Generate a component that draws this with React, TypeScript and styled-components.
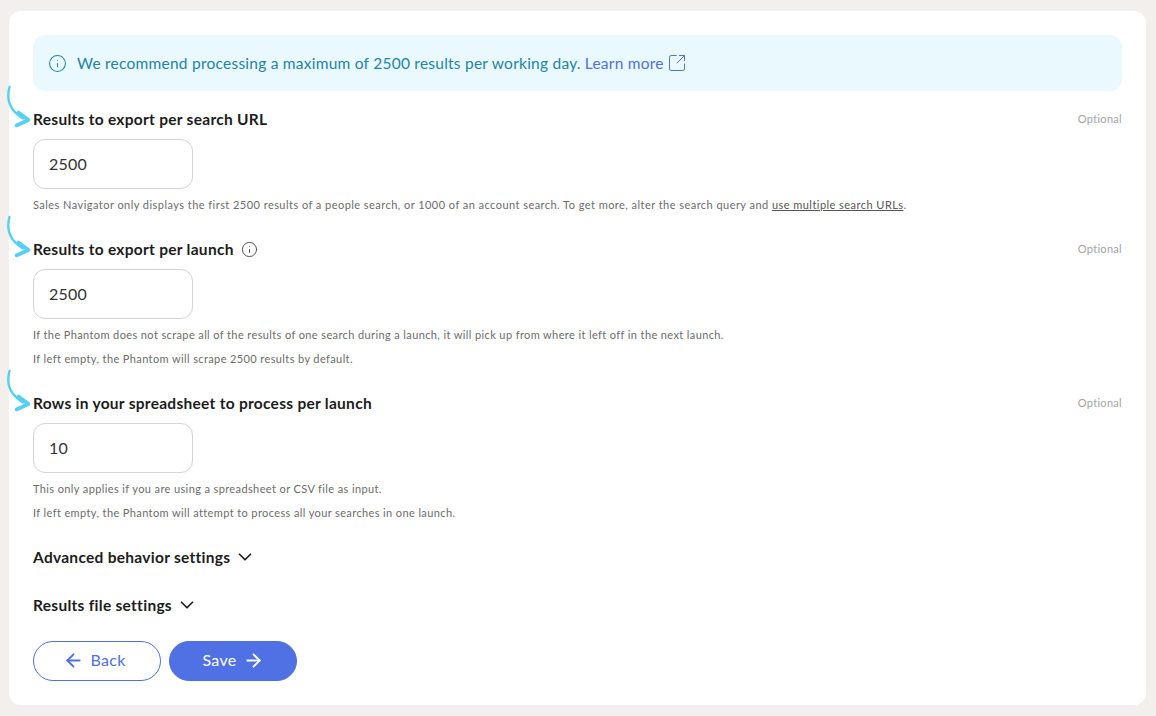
import React from 'react'
import styled, { createGlobalStyle } from 'styled-components'
import { ArrowLeft, ArrowRight, ChevronDown, Info, SquareArrowOutUpRight } from 'lucide-react'

const GlobalStyle = createGlobalStyle`
  html, body {
    margin: 0;
    padding: 0;
    background: #f3efec;
  }
  body {
    font-family: 'Lato', 'Open Sans', sans-serif;
  }
`

const Page = styled.div`
  width: 1156px;
  height: 716px;
  box-sizing: border-box;
  padding: 11px 10px 11px 9px;
  overflow: hidden;
`

const Card = styled.main`
  height: 694px;
  box-sizing: border-box;
  padding: 24px;
  background: #fff;
  border-radius: 12px;
  display: flex;
  flex-direction: column;
`

const Banner = styled.div`
  height: 56px;
  box-sizing: border-box;
  padding: 0 15px;
  display: flex;
  align-items: center;
  gap: 10px;
  background: #e9f9fe;
  border-radius: 12px;
  color: #2384a3;
  font-size: 15.5px;
  letter-spacing: 0.24px;
`

const BannerLink = styled.a`
  color: #4f71dc;
  display: inline-flex;
  align-items: center;
  gap: 3px;
  margin-left: -6px;
`

const Field = styled.section<{ $top: number }>`
  position: relative;
  margin-top: ${(p) => p.$top}px;
`

const FieldHeader = styled.div`
  height: 20px;
  display: flex;
  align-items: center;
  justify-content: space-between;
`

const LabelGroup = styled.div`
  display: flex;
  align-items: center;
  gap: 7px;
`

const Label = styled.label`
  color: #1c1c1c;
  font-size: 15.5px;
  font-weight: 700;
  letter-spacing: 0.28px;
`

const Optional = styled.span`
  position: relative;
  top: -1px;
  color: #a3a3a3;
  font-size: 11px;
  letter-spacing: 0.3px;
`

const NumberInput = styled.input`
  display: block;
  width: 160px;
  height: 50px;
  box-sizing: border-box;
  margin-top: 10px;
  padding: 0 15px 2px;
  border: 1px solid #d4d4d4;
  border-radius: 12px;
  outline: none;
  color: #333;
  font: 400 16px 'Lato', sans-serif;
  letter-spacing: 0.2px;
`

const HelpBlock = styled.div`
  margin-top: 8px;
  display: flex;
  flex-direction: column;
  gap: 8px;
`

const Help = styled.p<{ $wide?: boolean }>`
  margin: 0;
  height: 16px;
  line-height: 16px;
  color: #6b6b6b;
  font-size: 11px;
  letter-spacing: ${(p) => (p.$wide ? '0.456px' : '0.385px')};
`

const HelpLink = styled.a`
  color: #555;
  text-decoration: underline;
`

const Annotation = styled.svg`
  position: absolute;
  left: -28px;
  top: -24px;
  width: 30px;
  height: 44px;
`

const Collapsible = styled.button<{ $top: number }>`
  display: flex;
  align-items: center;
  gap: 4px;
  height: 20px;
  margin-top: ${(p) => p.$top}px;
  padding: 0;
  border: 0;
  background: none;
  color: #1c1c1c;
  font: 700 15.5px 'Lato', sans-serif;
  letter-spacing: 0.28px;
`

const Actions = styled.div`
  display: flex;
  gap: 8px;
  margin-top: 26px;
`

const ActionButton = styled.button<{ $primary?: boolean }>`
  width: 128px;
  height: 40px;
  box-sizing: border-box;
  display: flex;
  align-items: center;
  justify-content: center;
  gap: 6px;
  padding: 0 ${(p) => (p.$primary ? '0' : '5px')} 3px 0;
  border-radius: 20px;
  border: 1px solid #4f71dc;
  background: ${(p) => (p.$primary ? '#4f71e3' : '#fff')};
  color: ${(p) => (p.$primary ? '#fff' : '#4f71dc')};
  font: 400 16px 'Lato', sans-serif;
  letter-spacing: 0.3px;

  svg {
    position: relative;
    top: 1px;
  }
`

function ArrowMark() {
  return (
    <Annotation viewBox="0 0 30 44" fill="none" aria-hidden="true">
      <path d="M4.5 2 C1.5 13 4 25 18 33.5" stroke="#55d0f0" strokeWidth="2.4" strokeLinecap="round" />
      <path d="M13.5 27.5 L23.5 35 L11.5 40.5" stroke="#55d0f0" strokeWidth="3.6" strokeLinecap="round" strokeLinejoin="round" />
    </Annotation>
  )
}

type SettingProps = {
  label: string
  value: string
  top: number
  hasInfo?: boolean
  children: React.ReactNode
}

function Setting({ label, value, top, hasInfo, children }: SettingProps) {
  return (
    <Field $top={top}>
      <ArrowMark />
      <FieldHeader>
        <LabelGroup>
          <Label>{label}</Label>
          {hasInfo && <Info size={17} color="#444" strokeWidth={1.3} />}
        </LabelGroup>
        <Optional>Optional</Optional>
      </FieldHeader>
      <NumberInput defaultValue={value} />
      <HelpBlock>{children}</HelpBlock>
    </Field>
  )
}

export default function App() {
  return (
    <Page>
      <GlobalStyle />
      <Card>
        <Banner>
          <Info size={19} strokeWidth={1.3} />
          <span>We recommend processing a maximum of 2500 results per working day.</span>
          <BannerLink>
            Learn more
            <SquareArrowOutUpRight size={20} strokeWidth={1.2} />
          </BannerLink>
        </Banner>
        <Setting label="Results to export per search URL" value="2500" top={18}>
          <Help $wide>
            Sales Navigator only displays the first 2500 results of a people search, or 1000 of an account search. To get
            more, alter the search query and <HelpLink>use multiple search URLs</HelpLink>.
          </Help>
        </Setting>
        <Setting label="Results to export per launch" value="2500" top={26} hasInfo>
          <Help>If the Phantom does not scrape all of the results of one search during a launch, it will pick up from where it left off in the next launch.</Help>
          <Help>If left empty, the Phantom will scrape 2500 results by default.</Help>
        </Setting>
        <Setting label="Rows in your spreadsheet to process per launch" value="10" top={26}>
          <Help>This only applies if you are using a spreadsheet or CSV file as input.</Help>
          <Help>If left empty, the Phantom will attempt to process all your searches in one launch.</Help>
        </Setting>
        <Collapsible $top={26}>
          Advanced behavior settings <ChevronDown size={22} strokeWidth={1.8} />
        </Collapsible>
        <Collapsible $top={28}>
          Results file settings <ChevronDown size={22} strokeWidth={1.8} />
        </Collapsible>
        <Actions>
          <ActionButton>
            <ArrowLeft size={21} strokeWidth={2.2} /> Back
          </ActionButton>
          <ActionButton $primary>
            Save <ArrowRight size={21} strokeWidth={2.2} />
          </ActionButton>
        </Actions>
      </Card>
    </Page>
  )
}
